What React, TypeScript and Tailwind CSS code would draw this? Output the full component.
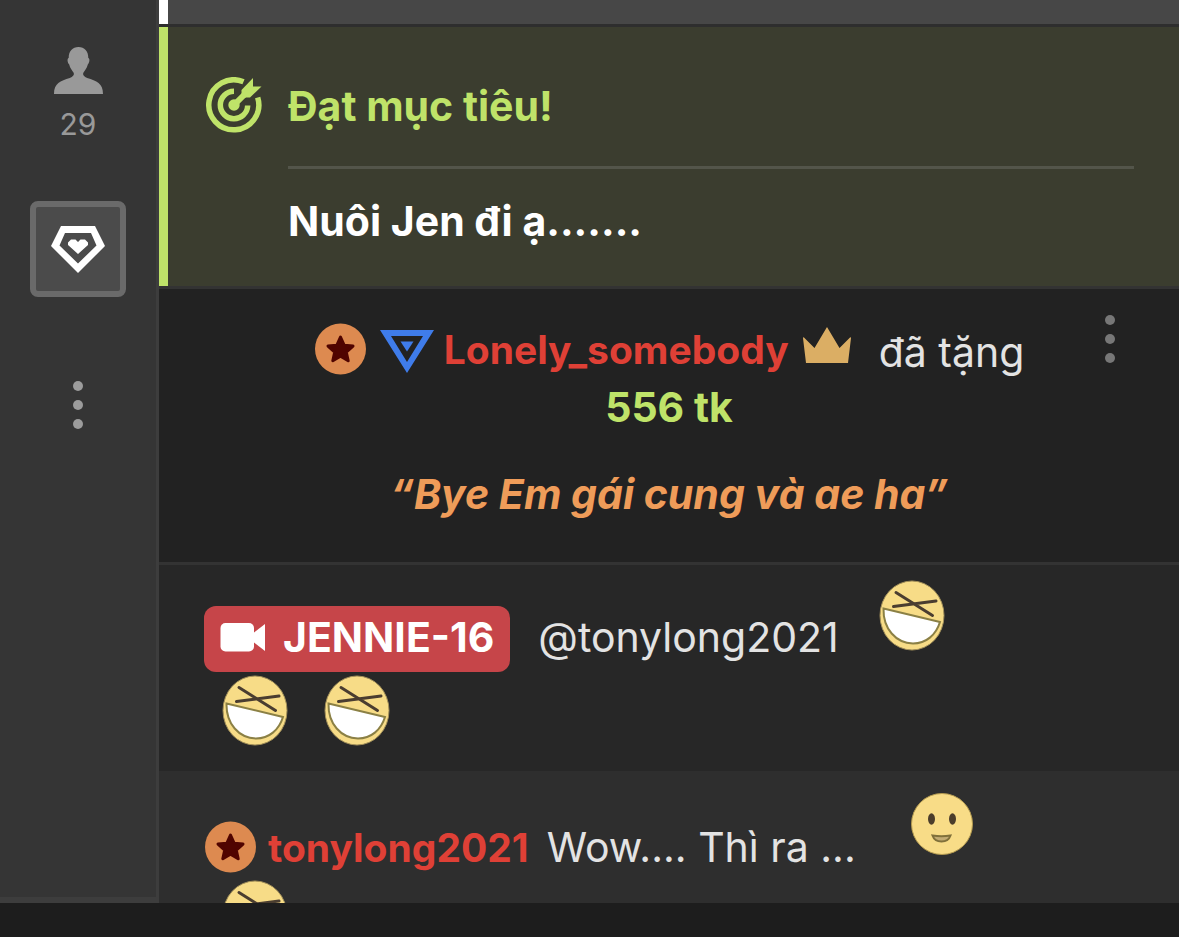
/*
 * Live room chat: icon sidebar on the left, message feed on the right
 */

import type { ReactNode } from "react";

const LAUGH = "laugh";
const SMILE = "smile";

function PersonIcon() {
  return (
    <svg viewBox="0 0 50 48" className="w-[50px] h-12 fill-[#999]" aria-hidden="true">
      <path d="M25.500 0c6 0 9.800 4 9.800 11 1.800.5 1.300 4.500-.5 6.500-.8 3.500-2.800 5.700-4.600 8.500-.6 2.200 1 3.700 4 5C43.500 34 50 36 50 47H1C1 36 7.500 34 16.800 31c3-1.300 4.600-2.800 4-5-1.800-2.800-3.800-5-4.600-8.500-1.800-2-2.300-6-.5-6.500C15.700 4 19.500 0 25.500 0z" />
    </svg>
  );
}

function GemIcon() {
  return (
    <svg viewBox="0 0 54 48" className="w-[54px] h-12" aria-hidden="true">
      <path fill="#fff" fillRule="evenodd" d="M10 1h34l10 20-27 27L0 21zM14 8L8.500 20.500 27 38.500 45.500 20.500 40 8z" />
      <path fill="#fff" d="M20 14.500h4.500l2.500 2.500 2.500-2.500H34l3 3v2.500L27 29 17 20v-2.500z" />
    </svg>
  );
}

function TargetIcon() {
  return (
    <svg viewBox="0 0 56 56" className="w-14 h-14 shrink-0" fill="none" aria-hidden="true">
      <path d="M37.500 4.800A25 25 0 1 0 51.700 20.500" stroke="#bfe369" strokeWidth="5.500" />
      <path d="M28 14.300A13.700 13.700 0 1 0 41.700 28.500" stroke="#bfe369" strokeWidth="5.500" />
      <path d="M28 28L42 14" stroke="#bfe369" strokeWidth="6" />
      <circle cx="28" cy="28" r="5.700" fill="#bfe369" />
      <path d="M35.500 13L47 1v8.500h8.500L44 20.500h-4L35.500 22z" fill="#bfe369" />
    </svg>
  );
}

function StarBadge() {
  return (
    <svg viewBox="0 0 52 52" className="w-[52px] h-[52px] shrink-0" aria-hidden="true">
      <circle cx="26.500" cy="26" r="25.500" fill="#dd8a50" />
      <path
        d="M26.500 14l3.600 8.200 8.900.9-6.700 5.900 1.900 8.800-7.700-4.500-7.700 4.500 1.900-8.800-6.700-5.900 8.900-.9z"
        fill="#500400"
        stroke="#500400"
        strokeWidth="3"
        strokeLinejoin="round"
      />
    </svg>
  );
}

function TriangleBadge() {
  return (
    <svg viewBox="0 0 54 43" className="w-[54px] h-[43px] shrink-0" fill="#3f7cea" aria-hidden="true">
      <path fillRule="evenodd" d="M0 0h54L27 43zM11 6l16 26L43 6z" />
      <path d="M20.500 11.500h13L27 21.500z" />
    </svg>
  );
}

function CrownIcon() {
  return (
    <svg viewBox="0 0 48 36" className="w-12 h-9 shrink-0" fill="#dbae64" aria-hidden="true">
      <path d="M24 0l12.500 21L47 10.500q1-.5 1 .5l-3 25H3L0 11q0-1 1-.5L11.500 21z" />
    </svg>
  );
}

function CameraIcon() {
  return (
    <svg viewBox="0 0 46 30" className="w-[46px] h-[30px] shrink-0" fill="#fff" aria-hidden="true">
      <rect x="0.500" y="1" width="33.500" height="28.500" rx="5" />
      <path d="M32 12L45 2v27L32 19z" />
    </svg>
  );
}

function Emoji({ kind }: { kind: string }) {
  if (kind === SMILE) {
    return (
      <svg viewBox="0 0 62 62" role="img" aria-label="smile" className="w-[62px] h-[62px] mx-[18px]">
        <circle cx="31" cy="31" r="30.500" fill="#f8dc87" stroke="#b39a50" />
        <ellipse cx="20.500" cy="26" rx="3.500" ry="5.700" fill="#4b3d2b" />
        <ellipse cx="41.500" cy="26" rx="3.500" ry="5.700" fill="#4b3d2b" />
        <path d="M21.500 42.500q9 1.500 18 0-2 6-9 6t-9-6z" fill="#c2ab73" stroke="#80703a" strokeWidth="2" />
      </svg>
    );
  }
  return (
    <svg viewBox="0 0 66 72" role="img" aria-label="laugh" className="w-[66px] h-[72px] mx-[18px]" fill="none">
      <ellipse cx="33" cy="35.500" rx="32" ry="34.500" fill="#f7dc87" stroke="#a4915a" />
      <path d="M4.500 28.500L61 42C57 55 47 63.500 34 63.500 17 63 4 49 4.500 28.500z" fill="#fff" stroke="#8b8045" strokeWidth="2" />
      <path d="M17 12.500L53.500 35.500M14.500 26.500L57 21" stroke="#4a3d30" strokeWidth="3" strokeLinecap="round" />
    </svg>
  );
}

function MoreButton({ label, tone }: { label: string; tone: string }) {
  return (
    <button type="button" aria-label={label} className={`flex flex-col items-center gap-[9px] px-4 ${tone}`}>
      <span className="w-[10px] h-[10px] rounded-full bg-current" />
      <span className="w-[10px] h-[10px] rounded-full bg-current" />
      <span className="w-[10px] h-[10px] rounded-full bg-current" />
    </button>
  );
}

function Message({ className, children }: { className: string; children: ReactNode }) {
  return (
    <article className={`flex flex-wrap items-start pl-[45px] pr-[136px] whitespace-nowrap ${className}`}>
      {children}
    </article>
  );
}

export default function App() {
  return (
    <div className="h-screen flex flex-col bg-[#1d1d1d] font-[Inter,sans-serif] text-[41px] leading-[50px] text-[#e3e3e3] overflow-hidden">
      <div className="flex flex-1 min-h-0">
        {/* Sidebar */}
        <aside className="w-[159px] shrink-0 flex flex-col items-center bg-[#353535] border-r-[3px] border-b-[6px] border-[#3d3d3d] pt-[47px]">
          <button type="button" aria-label="29 viewers" className="flex flex-col items-center gap-3">
            <PersonIcon />
            <span className="text-[30px] leading-[34px] text-[#999]">29</span>
          </button>
          <button
            type="button"
            aria-label="Fan club"
            className="mt-[60px] w-24 h-24 flex items-center justify-center rounded-lg border-[6px] border-[#6a6a6a] bg-[#4b4b4b]"
          >
            <GemIcon />
          </button>
          <div className="mt-[84px]">
            <MoreButton label="More" tone="text-[#9c9c9c]" />
          </div>
        </aside>

        {/* Feed */}
        <main className="flex-1 min-w-0 flex flex-col overflow-hidden bg-[#2e2e2e]">
          <div className="h-6 shrink-0 bg-[#474747] border-l-[9px] border-white" />

          <section className="shrink-0 flex gap-[26px] mt-[3px] border-l-[9px] border-[#bfe369] bg-[#3b3d2f] pl-[38px] pr-[45px] pt-[50px] pb-10">
            <TargetIcon />
            <div className="flex-1 font-bold">
              <h2 className="leading-[58px] text-[#bfe369]">Đạt mục tiêu!</h2>
              <hr className="mt-[31px] border-t-[3px] border-[#53554a]" />
              <p className="mt-[27px] text-white">Nuôi Jen đi ạ.......</p>
            </div>
          </section>

          <section className="relative shrink-0 border-y-[3px] border-[#333] bg-[#222] pt-[33px] pb-[42px] flex flex-col items-center whitespace-nowrap">
            <div className="flex items-center h-[54px]">
              <StarBadge />
              <span className="ml-[14px] pt-1">
                <TriangleBadge />
              </span>
              <a href="#lonely" className="ml-[10px] pt-0.5 text-[39px] font-bold text-[#df4036]">Lonely_somebody</a>
              <span className="ml-[14px] pb-2">
                <CrownIcon />
              </span>
              <span className="ml-7 pt-1.5">đã tặng</span>
            </div>
            <strong className="mt-1.5 font-bold text-[#bfe369]">556 tk</strong>
            <em className="mt-[37px] pb-px font-bold text-[#ef9c59]">“Bye Em gái cung và ae ha”</em>
            <div className="absolute right-[48px] top-[26px]">
              <MoreButton label="Message options" tone="text-[#777]" />
            </div>
          </section>

          <Message className="shrink-0 bg-[#272727] pt-[15px] pb-6 gap-y-[3px]">
            <a
              href="#jennie"
              className="mt-[26px] mr-[28px] h-[66px] px-4 pb-1 flex items-center gap-[17px] rounded-xl bg-[#c64549] font-bold text-white"
            >
              <CameraIcon />
              JENNIE-16
            </a>
            <span className="mt-8 mr-[22px]">@tonylong2021</span>
            <Emoji kind={LAUGH} />
            <Emoji kind={LAUGH} />
            <Emoji kind={LAUGH} />
          </Message>

          <Message className="bg-[#2e2e2e] pt-[22px] gap-y-[7px]">
            <div className="mt-7 h-[52px] mr-[37px] flex items-center">
              <StarBadge />
              <a href="#tonylong2021" className="ml-[12px] mr-[18px] pt-0.5 text-[39px] font-bold text-[#df4036]">tonylong2021</a>
              <span>Wow.... Thì ra ...</span>
            </div>
            <Emoji kind={SMILE} />
            <Emoji kind={LAUGH} />
          </Message>
        </main>
      </div>
      <footer className="h-[34px] shrink-0 bg-[#1d1d1d]" />
    </div>
  );
}
